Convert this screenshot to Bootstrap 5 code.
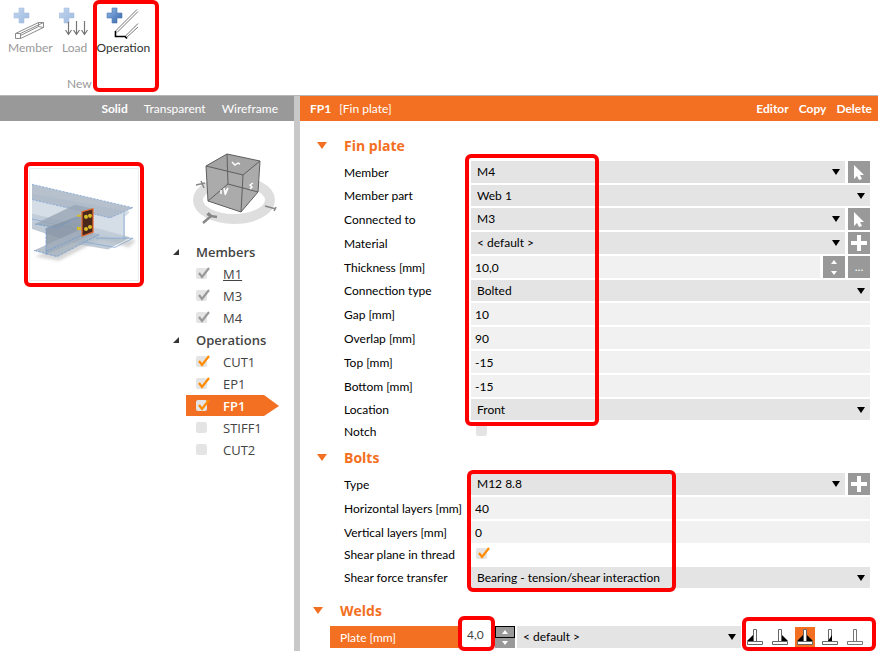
<!DOCTYPE html>
<html lang="en">
<head>
<meta charset="utf-8">
<meta name="viewport" content="width=device-width, initial-scale=1">
<title>Connection editor</title>
<link href="https://cdn.jsdelivr.net/npm/bootstrap@5.3.0/dist/css/bootstrap.min.css" rel="stylesheet">
<style>
:root { --brand: #f36f21; --tool: #999; --field: #e4e4e4; --entry: #f1f1f1; }
body { font: 12px/20px Lato, "Open Sans", sans-serif; color: #000; background: #fff; }
button { font: inherit; color: inherit; background: none; border: 0; padding: 0; }
a, a:hover { color: inherit; text-decoration: none; }
svg { display: block; }

.callout-box { position: absolute; border: 4px solid #f00; border-radius: 6px; pointer-events: none; z-index: 2; }

/* ribbon */
.ribbon { height: 96px; border-bottom: 1px solid #b8b8b8; padding-left: 8px; }
.ribbon-row { gap: 6px; }
.ribbon-btn { color: #999; padding-top: 6px; }
.ribbon-btn svg { margin: 0 auto; }
.ribbon-btn span { display: block; line-height: 16px; }
.ribbon-active { color: #333; }
.ribbon-caption { color: #999; padding-left: 59px; margin-top: 20px; line-height: 16px; }
.mark-ribbon { left: 93px; top: 0; width: 66px; height: 92px; }

/* side pane */
.side-pane { width: 300px; border-right: 6px solid #c8c8c8; }
.view-bar { height: 25px; background: var(--tool); color: #fff; padding-right: 16px; gap: 16px; }
.thumb-frame { width: 120px; height: 125px; border: 4px solid #f00; border-radius: 6px; margin: 41px 0 0 24px; padding: 2px 1px; }
.thumb-frame svg { border: 1px solid #e8eeee; width: 100%; height: 100%; }
.tree { margin-left: 29px; padding-top: 29px; width: 110px; color: #444; font: 600 13px/22px "Open Sans", "Noto Sans", sans-serif; }
.tree-cube { margin: 0 0 14px 17px; }
.tree-head { padding-left: 23px; position: relative; }
.tree-head::before { content: ""; position: absolute; left: 0; top: 8px; border-left: 6px solid transparent; border-bottom: 6px solid #333; }
.tree-item { margin-left: 13px; padding-left: 10px; height: 22px; width: 93px; font-weight: 500; }
.tree-item .tick { margin-bottom: 2px; }
.tree-item label { padding-left: 13px; }
.tree-item.current { background: linear-gradient(var(--brand), var(--brand)) 0 0 / 100% 21px no-repeat; color: #fff; font-weight: 600; clip-path: polygon(0 0, 78px 0, 93px 11px, 78px 21px, 0 21px); }

/* tick boxes */
.tick { appearance: none; flex: none; width: 14px; height: 14px; margin: 0; background: url("data:image/svg+xml,%3Csvg xmlns='http://www.w3.org/2000/svg' viewBox='0 0 14 14'%3E%3Crect y='2' width='11' height='11' rx='2' fill='%23e4e4e4'/%3E%3C/svg%3E") 0 0 / 14px 14px no-repeat; }
.tick:checked { background-image: url("data:image/svg+xml,%3Csvg xmlns='http://www.w3.org/2000/svg' viewBox='0 0 14 14'%3E%3Crect y='2' width='11' height='11' rx='2' fill='%23e4e4e4'/%3E%3Cpath d='M3 7l3 4 7-9' fill='none' stroke='%23ff8c00' stroke-width='2.200'/%3E%3C/svg%3E"); }
.tick-grey:checked { background-image: url("data:image/svg+xml,%3Csvg xmlns='http://www.w3.org/2000/svg' viewBox='0 0 14 14'%3E%3Crect y='2' width='11' height='11' rx='2' fill='%23e4e4e4'/%3E%3Cpath d='M3 7l3 4 7-9' fill='none' stroke='%23999' stroke-width='2.200'/%3E%3C/svg%3E"); }

/* property pane */
.title-bar { height: 25px; background: var(--brand); color: #fff; padding: 0 6px 0 10px; }
.title-links { gap: 10px; }
.props { padding: 15px 8px 0 44px; }
.section-head { position: relative; height: 20px; margin-bottom: 5px; font: 700 14px/20px "Open Sans", "Noto Sans", sans-serif; color: var(--brand); }
.section-head::before { content: ""; position: absolute; left: -27px; top: 6px; border: 5px solid transparent; border-top: 7px solid var(--brand); border-bottom: 0; }
.head-bolts { margin-top: 6px; }
.head-welds { margin: 13px 0 5px -4px; }
.prop { display: flex; gap: 3px; height: 22px; margin-bottom: 2px; align-items: stretch; }
.prop-plain { height: 21px; }
.prop-tick { height: 20px; }
.prop > label { flex: 0 0 124px; min-width: 0; white-space: nowrap; line-height: 24px; }
.prop-plain > label { line-height: 22px; }
.prop-tick > label { line-height: 20px; }
.prop .form-select, .prop .form-control { flex: 1 1 0; min-width: 0; border: 0; border-radius: 0; color: #000; font-size: 12px; line-height: 20px; padding: 0 0 1px 6px; min-height: 0; }
.prop .form-select { background-color: var(--field); background-size: 8px 6px; background-position: right 5px center; padding-right: 18px;
  --bs-form-select-bg-img: url("data:image/svg+xml,%3Csvg xmlns='http://www.w3.org/2000/svg' viewBox='0 0 8 6'%3E%3Cpath d='M0 0h8L4 6z'/%3E%3C/svg%3E"); }
.prop-plain .form-select { padding-bottom: 0; }
.prop .form-control { background: var(--entry); padding: 2px 4px 0; }
.tool-btn { flex: 0 0 22px; background: var(--tool); color: #fff; }
.stepper { flex: 0 0 22px; background: var(--tool); display: flex; flex-direction: column; }
.stepper button { flex: 1; display: flex; align-items: center; justify-content: center; }
.prop-tick .tick { margin: 1px 0 0 5px; }
.group-fin { position: relative; }
.mark-fin { left: 121px; top: -7px; width: 134px; height: 272px; }
.group-bolts { position: relative; }
.mark-bolts { left: 123px; top: -3px; width: 209px; height: 122px; }

/* weld row */
.weld-row { margin-left: -14px; }
.prop.weld-row > label { flex: 0 0 132px; background: var(--brand); color: #fff; padding-left: 10px; line-height: 23px; }
.weld-size { flex: 0 0 33px; position: relative; }
.weld-size .form-control { background: #fff; height: 18px; color: #444; padding: 0 5px; }
.mark-size { left: -4px; top: -10px; width: 37px; height: 35px; }
.weld-row .stepper { flex-basis: 20px; margin-right: 2px; }
.weld-row .stepper button:first-child { border: 1px solid #000; }
.weld-icons { position: relative; display: flex; gap: 5px; padding: 1px 5px 0 4px; }
.weld-icons button { width: 20px; height: 20px; }
.weld-icons .chosen { background: var(--brand); }
.mark-icons { left: 1px; top: -9px; right: -6px; height: 34px; }
</style>
</head>
<body class="min-vh-100 d-flex flex-column overflow-hidden">

<header class="ribbon position-relative">
  <div class="ribbon-row d-flex">
    <button type="button" class="ribbon-btn">
      <svg width="34" height="34" viewBox="0 0 34 34"><defs><linearGradient id="plusSoft" x1="0" y1="0" x2="1" y2="1"><stop offset="0" stop-color="#c3d6ef"/><stop offset="1" stop-color="#9db9de"/></linearGradient><linearGradient id="plusFull" x1="0" y1="0" x2="1" y2="1"><stop offset="0" stop-color="#94b9e8"/><stop offset="1" stop-color="#3465a8"/></linearGradient></defs><path d="M6 2h5v5h5v5h-5v5H6v-5H1V7h5z" fill="url(#plusSoft)" stroke="#a9c0df" stroke-width=".6"/><path d="M2.500 27.500h5v5h-5zM2.500 27.500l23-11h5l-23 11M30.500 16.500v5l-23 11M25.500 16.500v4l5 1M25.500 20.500l-18 9" fill="none" stroke="#8b8b8b"/></svg>
      <span>Member</span>
    </button>
    <button type="button" class="ribbon-btn">
      <svg width="32" height="34" viewBox="0 0 32 34"><path d="M5 2h5v5h5v5h-5v5H5v-5H0V7h5z" fill="url(#plusSoft)" stroke="#a9c0df" stroke-width=".6"/><path d="M9.500 16v12M6.500 24l3 4.500 3-4.500M17.500 15v13M14.500 24l3 4.500 3-4.500M25.500 15v13M22.500 24l3 4.500 3-4.500" fill="none" stroke="#777" stroke-width="1.200"/></svg>
      <span>Load</span>
    </button>
    <button type="button" class="ribbon-btn ribbon-active">
      <svg width="34" height="34" viewBox="0 0 34 34"><path d="M6 2h5v5h5v5h-5v5H6v-5H1V7h5z" fill="url(#plusFull)" stroke="#4a78b5" stroke-width=".6"/><path d="M9.500 25L31 3.500M11 26.500L32 5.500M19 30.500l13-13M20 32l12-11" fill="none" stroke="#777"/><path d="M9.500 25v5.500H19l2 2" fill="none" stroke="#000" stroke-width="1.600"/></svg>
      <span>Operation</span>
    </button>
  </div>
  <div class="ribbon-caption">New</div>
  <div class="callout-box mark-ribbon"></div>
</header>

<div class="d-flex flex-grow-1">
  <aside class="side-pane flex-shrink-0">
    <nav class="view-bar d-flex align-items-center justify-content-end">
      <a href="#" class="fw-bold">Solid</a>
      <a href="#">Transparent</a>
      <a href="#">Wireframe</a>
    </nav>
    <div class="d-flex align-items-start">
      <div class="thumb-frame flex-shrink-0">
        <svg viewBox="0 0 108 109" preserveAspectRatio="none">
          <defs><filter id="soft"><feGaussianBlur stdDeviation="1.500"/></filter></defs>
          <path d="M5 86l24 4 42-21 28 8 7-7-40-8z" fill="#bbb" opacity=".6" filter="url(#soft)"/>
          <path d="M2 44l72 16 26 7-22 12-30-5L2 59z" fill="#aab8c7" opacity=".75"/>
          <path d="M2 24l98 18-5 5v22L68 66 2 52z" fill="#c3cedb" opacity=".7"/>
          <path d="M2 15l101 23-23 10L2 30z" fill="#a9b6c4" opacity=".85"/>
          <path d="M2 15l101 23-23 10L2 30" fill="none" stroke="#7ea6db" stroke-width=".8" stroke-dasharray="2 1.500"/>
          <path d="M94 43v26M66 68l37 0-18 9-34-6M2 49l60 14" fill="none" stroke="#86a8d4" stroke-width=".8"/>
          <path d="M5 54l40-19 18 4-36 19z" fill="#97a5b4" opacity=".8"/>
          <path d="M16 58l47-17v23L16 84z" fill="#8794a3" opacity=".85"/>
          <path d="M4 80l45-20 21 4-43 22z" fill="#a5b1bf" opacity=".8"/>
          <path d="M4 80l23 6 43-22M16 58v26M5 54l22 4 36-18M16 81l47-21" fill="none" stroke="#739bd1" stroke-width=".8" stroke-dasharray="3 1"/>
          <path d="M52 42l11-3v23l-11 4z" fill="#49271d" stroke="#e9682b" stroke-width="1.200"/>
          <g fill="#d9bd26"><circle cx="56" cy="47" r="2"/><circle cx="60" cy="46" r="2"/><circle cx="56" cy="59" r="2"/><circle cx="60" cy="57" r="2"/><path d="M47 45h4v2h-4zM47 57h4v3h-4z"/></g>
        </svg>
      </div>
      <div class="tree">
        <svg class="tree-cube" width="88" height="77" viewBox="190 150 88 77" role="img" aria-label="View cube">
          <ellipse cx="234" cy="200" rx="36" ry="19" fill="none" stroke="#dedede" stroke-width="10"/>
          <path d="M206 166l21-12 33 7-2 31-17 20-33-11z" fill="#ababab"/>
          <path d="M206 166l21-12 33 7-17 14z" fill="#a4a4a4"/>
          <path d="M206 166l21-12 33 7-2 31-17 20-33-11zM206 166l37 9 17-14M243 175l-2 37M227 154l1 30-20 17M228 184l30 8" fill="none" stroke="#5f5f5f"/>
          <path d="M232 162l3 3 3-2 2 1" fill="none" stroke="#fff" stroke-width="1.400"/><path d="M221 190v4M224 188l1 5 3-5-3 7" fill="none" stroke="#fff" stroke-width="1.500"/><path d="M253 183l-3 2 2 2-2 2" fill="none" stroke="#fff" stroke-width="1.500"/>
          <path d="M203 223l8-7 6 1M211 216l-3-3M211 216l-4-2" fill="none" stroke="#888" stroke-width="2.500"/><path d="M196 185l9-2M201 181l3 7M265 206l11 3M274 211l2-4" fill="none" stroke="#888" stroke-width="1.500"/>
        </svg>
        <div class="tree-head">Members</div>
        <div class="tree-item d-flex align-items-center"><input class="tick tick-grey" type="checkbox" id="m1" checked><label for="m1"><u>M1</u></label></div>
        <div class="tree-item d-flex align-items-center"><input class="tick tick-grey" type="checkbox" id="m3" checked><label for="m3">M3</label></div>
        <div class="tree-item d-flex align-items-center"><input class="tick tick-grey" type="checkbox" id="m4" checked><label for="m4">M4</label></div>
        <div class="tree-head">Operations</div>
        <div class="tree-item d-flex align-items-center"><input class="tick" type="checkbox" id="cut1" checked><label for="cut1">CUT1</label></div>
        <div class="tree-item d-flex align-items-center"><input class="tick" type="checkbox" id="ep1" checked><label for="ep1">EP1</label></div>
        <div class="tree-item current d-flex align-items-center"><input class="tick" type="checkbox" id="fp1" checked><label for="fp1">FP1</label></div>
        <div class="tree-item d-flex align-items-center"><input class="tick" type="checkbox" id="stiff1"><label for="stiff1">STIFF1</label></div>
        <div class="tree-item d-flex align-items-center"><input class="tick" type="checkbox" id="cut2"><label for="cut2">CUT2</label></div>
      </div>
    </div>
  </aside>

  <main class="flex-grow-1">
    <div class="title-bar d-flex align-items-center">
      <strong>FP1</strong><span class="ms-2 me-auto">[Fin plate]</span>
      <div class="title-links d-flex fw-bold"><a href="#">Editor</a><a href="#">Copy</a><a href="#">Delete</a></div>
    </div>

    <form class="props">
      <h2 class="section-head">Fin plate</h2>
      <div class="group-fin">
        <div class="prop"><label for="member">Member</label><select class="form-select" id="member"><option>M4</option></select>
          <button type="button" class="tool-btn" aria-label="Pick member"><svg width="22" height="22" viewBox="0 0 22 22"><path d="M6 4v14l3-3 2 4 3-1-2-4h4z" fill="#fff"/></svg></button></div>
        <div class="prop prop-plain"><label for="part">Member part</label><select class="form-select" id="part"><option>Web 1</option></select></div>
        <div class="prop"><label for="conn">Connected to</label><select class="form-select" id="conn"><option>M3</option></select>
          <button type="button" class="tool-btn" aria-label="Pick connected member"><svg width="22" height="22" viewBox="0 0 22 22"><path d="M6 4v14l3-3 2 4 3-1-2-4h4z" fill="#fff"/></svg></button></div>
        <div class="prop"><label for="material">Material</label><select class="form-select" id="material"><option>&lt; default &gt;</option></select>
          <button type="button" class="tool-btn" aria-label="Add material"><svg width="22" height="22" viewBox="0 0 22 22"><path d="M9 3h4v6h6v4h-6v6H9v-6H3V9h6z" fill="#fff"/></svg></button></div>
        <div class="prop"><label for="thick">Thickness [mm]</label><input class="form-control" id="thick" value="10,0">
          <div class="stepper"><button type="button" aria-label="Increase"><svg width="6" height="4"><path d="M0 4h6L3 0z" fill="#fff"/></svg></button><button type="button" aria-label="Decrease"><svg width="6" height="4"><path d="M0 0h6L3 4z" fill="#fff"/></svg></button></div>
          <button type="button" class="tool-btn">...</button></div>
        <div class="prop prop-plain"><label for="ctype">Connection type</label><select class="form-select" id="ctype"><option>Bolted</option></select></div>
        <div class="prop"><label for="gap">Gap [mm]</label><input class="form-control" id="gap" value="10"></div>
        <div class="prop"><label for="overlap">Overlap [mm]</label><input class="form-control" id="overlap" value="90"></div>
        <div class="prop"><label for="top">Top [mm]</label><input class="form-control" id="top" value="-15"></div>
        <div class="prop"><label for="bottom">Bottom [mm]</label><input class="form-control" id="bottom" value="-15"></div>
        <div class="prop prop-plain"><label for="location">Location</label><select class="form-select" id="location"><option>Front</option></select></div>
        <div class="prop prop-tick"><label for="notch">Notch</label><input class="tick" type="checkbox" id="notch"></div>
        <div class="callout-box mark-fin"></div>
      </div>

      <h2 class="section-head head-bolts">Bolts</h2>
      <div class="group-bolts">
        <div class="prop"><label for="btype">Type</label><select class="form-select" id="btype"><option>M12 8.8</option></select>
          <button type="button" class="tool-btn" aria-label="Add bolt type"><svg width="22" height="22" viewBox="0 0 22 22"><path d="M9 3h4v6h6v4h-6v6H9v-6H3V9h6z" fill="#fff"/></svg></button></div>
        <div class="prop"><label for="hl">Horizontal layers [mm]</label><input class="form-control" id="hl" value="40"></div>
        <div class="prop"><label for="vl">Vertical layers [mm]</label><input class="form-control" id="vl" value="0"></div>
        <div class="prop prop-tick"><label for="shear">Shear plane in thread</label><input class="tick" type="checkbox" id="shear" checked></div>
        <div class="prop prop-plain"><label for="sft">Shear force transfer</label><select class="form-select" id="sft"><option>Bearing - tension/shear interaction</option></select></div>
        <div class="callout-box mark-bolts"></div>
      </div>

      <h2 class="section-head head-welds">Welds</h2>
      <div class="weld-row prop gap-0">
        <label for="plate">Plate [mm]</label>
        <div class="weld-size"><input class="form-control" id="plate" value="4,0"><div class="callout-box mark-size"></div></div>
        <div class="stepper"><button type="button" aria-label="Increase"><svg width="6" height="4"><path d="M0 4h6L3 0z" fill="#fff"/></svg></button><button type="button" aria-label="Decrease"><svg width="6" height="4"><path d="M0 0h6L3 4z" fill="#fff"/></svg></button></div>
        <select class="form-select" aria-label="Weld material"><option>&lt; default &gt;</option></select>
        <div class="weld-icons">
          <button type="button" aria-label="Fillet left"><svg width="20" height="20" viewBox="0 0 20 20"><path d="M8 8v6H2z"/><path d="M8.500 2.500h3v12h-3zM2.500 14.500h15v3h-15z" fill="#fff" stroke="#666"/></svg></button>
          <button type="button" aria-label="Fillet right"><svg width="20" height="20" viewBox="0 0 20 20"><path d="M12 8v6h6z"/><path d="M8.500 2.500h3v12h-3zM2.500 14.500h15v3h-15z" fill="#fff" stroke="#666"/></svg></button>
          <button type="button" class="chosen" aria-label="Fillet both"><svg width="20" height="20" viewBox="0 0 20 20"><path d="M8 8v6H2zM12 8v6h6z"/><path d="M8.500 2.500h3v12h-3zM2.500 14.500h15v3h-15z" fill="#fff" stroke="#666"/></svg></button>
          <button type="button" aria-label="Butt weld"><svg width="20" height="20" viewBox="0 0 20 20"><path d="M8.500 2.500h3v12h-3zM2.500 14.500h15v3h-15z" fill="#fff" stroke="#666"/><path d="M12 8v6H8z"/></svg></button>
          <button type="button" aria-label="No weld"><svg width="20" height="20" viewBox="0 0 20 20"><path d="M8.500 2.500h3v12h-3zM2.500 14.500h15v3h-15z" fill="#fff" stroke="#777"/></svg></button>
          <div class="callout-box mark-icons"></div>
        </div>
      </div>
    </form>
  </main>
</div>
<script src="https://cdn.jsdelivr.net/npm/bootstrap@5.3.0/dist/js/bootstrap.bundle.min.js"></script>
</body>
</html>
